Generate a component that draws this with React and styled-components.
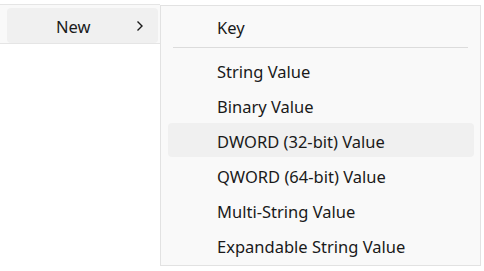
import React from "react";
import styled, { createGlobalStyle } from "styled-components";

const GlobalStyle = createGlobalStyle`
  html, body {
    margin: 0;
    padding: 0;
    background: #ffffff;
  }
  body {
    font-family: "Noto Sans", "Open Sans", sans-serif;
    color: #1a1a1a;
  }
`;

const Screen = styled.div`
  display: flex;
  align-items: flex-start;
  width: 484px;
  height: 271px;
  overflow: hidden;
`;

const ParentMenu = styled.div`
  width: 160px;
  margin-top: 4px;
  padding: 3px 2px 0 7px;
  box-sizing: border-box;
  background: #f9f9f9;
  border-top: 1px solid #e5e5e5;
  border-bottom: 1px solid #e5e5e5;
`;

const ParentItem = styled.div`
  display: flex;
  align-items: center;
  justify-content: space-between;
  height: 35px;
  padding: 1px 14px 0 49px;
  box-sizing: border-box;
  border-radius: 4px;
  background: #f0f0f0;
  font-size: 16.5px;
`;

const SubMenu = styled.div`
  width: 321px;
  margin-top: 5px;
  padding: 3px 6px 2px 7px;
  box-sizing: border-box;
  background: #f9f9f9;
  border: 1px solid #e2e2e2;
`;

const Item = styled.div`
  display: flex;
  align-items: center;
  height: 34px;
  margin-bottom: 1px;
  padding: 2px 0 0 49px;
  box-sizing: border-box;
  border-radius: 4px;
  font-size: 16.5px;
  background: ${(p) => (p.$hover ? "#f0f0f0" : "transparent")};
`;

const Separator = styled.div`
  height: 1px;
  margin: 4px 6px 5px 5px;
  background: #dcdcdc;
`;

const Chevron = () => (
  <svg width="9" height="12" viewBox="0 0 9 12">
    <path d="M2.5 1.5 L7 6 L2.5 10.5" fill="none" stroke="#1a1a1a" strokeWidth="1.4" />
  </svg>
);

const values = [
  "String Value",
  "Binary Value",
  "DWORD (32-bit) Value",
  "QWORD (64-bit) Value",
  "Multi-String Value",
  "Expandable String Value",
];

export default function App() {
  return (
    <Screen>
      <GlobalStyle />
      <ParentMenu>
        <ParentItem>
          <span>New</span>
          <Chevron />
        </ParentItem>
      </ParentMenu>
      <SubMenu>
        <Item>Key</Item>
        <Separator />
        {values.map((v) => (
          <Item key={v} $hover={v.startsWith("DWORD")}>
            {v}
          </Item>
        ))}
      </SubMenu>
    </Screen>
  );
}
